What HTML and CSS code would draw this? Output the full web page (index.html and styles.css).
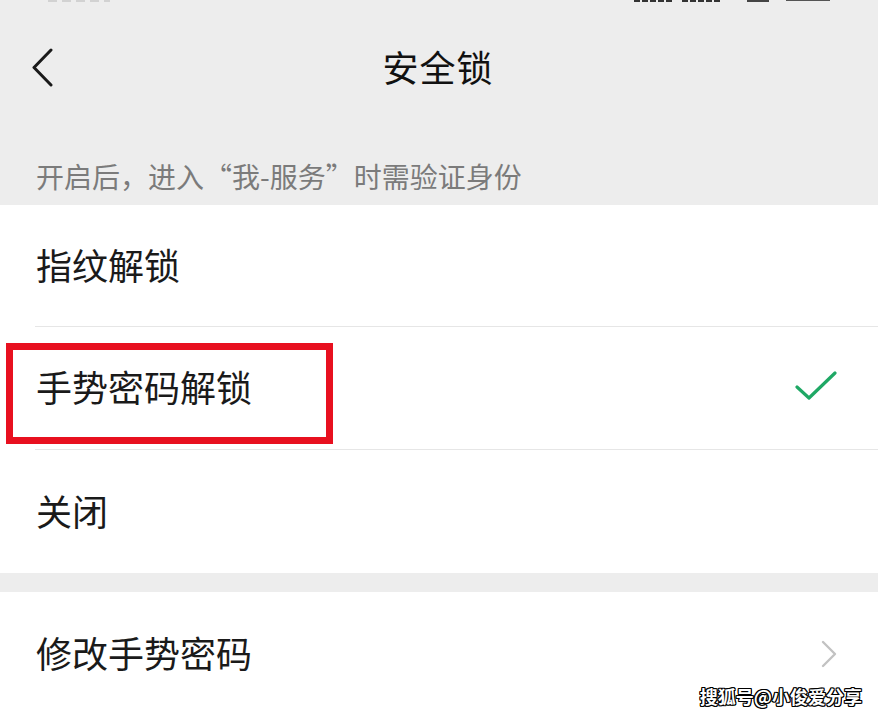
FILE: index.html
```html
<!DOCTYPE html>
<html lang="zh-CN">
<head>
<meta charset="utf-8">
<title>安全锁</title>
<link rel="stylesheet" href="styles.css">
</head>
<body>
<div class="screen">
  <div class="status">
    <span class="sb sb-time"></span>
    <span class="sb-spacer"></span>
    <span class="sb sb-sig"></span>
    <span class="sb sb-sig"></span>
    <span class="sb sb-wifi"></span>
    <span class="sb sb-bat"></span>
  </div>
  <header class="nav">
    <svg class="back" width="24" height="40" viewBox="0 0 24 40"><path d="M20 2 L3 19.5 L20 37" fill="none" stroke="#1a1a1a" stroke-width="3" stroke-linecap="round" stroke-linejoin="round"/></svg>
    <h1 class="title">安全锁</h1>
  </header>
  <p class="hint">开启后，进入“我-服务”时需验证身份</p>
  <section class="group">
    <div class="row r1"><span class="label">指纹解锁</span></div>
    <div class="divider"></div>
    <div class="row r2">
      <span class="label">手势密码解锁</span>
      <svg class="check" width="44" height="32" viewBox="0 0 44 32"><path d="M3 16 L15 27 L41 2" fill="none" stroke="#1fa865" stroke-width="3.2" stroke-linecap="round" stroke-linejoin="round"/></svg>
      <div class="highlight"></div>
    </div>
    <div class="divider"></div>
    <div class="row r3"><span class="label">关闭</span></div>
  </section>
  <div class="gap"></div>
  <section class="group">
    <div class="row r4">
      <span class="label">修改手势密码</span>
      <svg class="arrow" width="18" height="28" viewBox="0 0 18 28"><path d="M3 2 L15 14 L3 26" fill="none" stroke="#c2c2c2" stroke-width="2.4" stroke-linecap="round" stroke-linejoin="round"/></svg>
    </div>
  </section>
  <div class="watermark">搜狐号@小俊爱分享</div>
</div>
</body>
</html>
```
FILE: styles.css
```css
* { box-sizing: border-box; }
html, body { margin: 0; padding: 0; }
body {
  background: #ededed;
  font-family: "Noto Sans CJK SC", "Noto Sans", sans-serif;
  color: #1a1a1a;
}
.screen {
  position: relative;
  width: 878px;
  height: 715px;
  overflow: hidden;
  background: #ededed;
}
.status {
  height: 4px;
  display: flex;
  align-items: flex-start;
  padding: 0 48px;
  overflow: hidden;
}
.sb { display: block; height: 2px; }
.sb-time {
  width: 62px;
  background: repeating-linear-gradient(90deg, #d2d2d2 0 9px, transparent 9px 14px);
}
.sb-spacer { flex: 1; }
.sb-sig {
  width: 40px;
  margin-right: 8px;
  background: repeating-linear-gradient(90deg, #333 0 6px, transparent 6px 8px);
}
.sb-wifi { width: 22px; margin-left: 17px; background: #444; }
.sb-bat { width: 44px; margin-left: 17px; height: 1px; background: #555; }
.nav {
  height: 132px;
  display: flex;
  align-items: center;
  justify-content: center;
  position: relative;
}
.back {
  position: absolute;
  left: 31px;
  top: 44px;
}
.title {
  margin: 0;
  font-size: 36px;
  font-weight: 400;
  color: #111111;
  letter-spacing: 1px;
  line-height: 1;
  margin-top: -9px;
  padding-right: 2px;
}
.hint {
  margin: 0;
  height: 69px;
  padding: 22px 0 0 36px;
  font-size: 28px;
  line-height: 36px;
  color: #7b7b7b;
}
.group {
  background: #ffffff;
}
.row {
  position: relative;
  display: flex;
  align-items: center;
  padding-left: 36px;
  padding-right: 40px;
}
.r1 { height: 121px; }
.r2 { height: 122px; }
.r3 { height: 123px; }
.r4 { height: 123px; }
.label {
  font-size: 36px;
  line-height: 1;
  color: #1a1a1a;
  flex: 1;
  margin-bottom: 4px;
}
.divider {
  height: 1px;
  margin-left: 35px;
  background: #e6e6e6;
}
.check { margin-top: -2px; }
.highlight {
  position: absolute;
  left: 6px;
  top: 16px;
  width: 327px;
  height: 101px;
  border: 7px solid #e8101f;
}
.gap { height: 19px; }
.watermark {
  position: absolute;
  right: 16px;
  bottom: 10px;
  font-size: 18px;
  font-weight: 700;
  color: #ffffff;
  line-height: 1;
  text-shadow: -1px -1px 0 #000, 1px -1px 0 #000, -1px 1px 0 #000, 1px 1px 0 #000, 0 1px 0 #000, 1px 0 0 #000, 0 -1px 0 #000, -1px 0 0 #000;
}
```
